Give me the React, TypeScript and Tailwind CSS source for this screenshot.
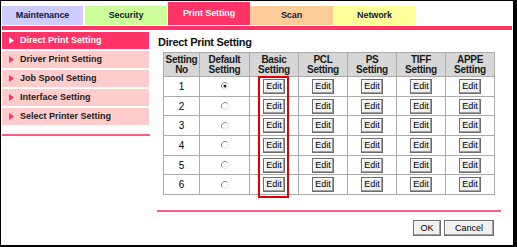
import React from 'react';

const tabs = [
  { label: 'Maintenance', cls: 'ml-[1px] w-[81px] h-[19px] bg-[#ccccff] text-[#16163a]' },
  { label: 'Security', cls: 'ml-[2px] w-[82px] h-[19px] bg-[#ccff99] text-[#16163a]' },
  { label: 'Print Setting', cls: 'ml-[1px] w-[82px] h-[23px] bg-[#ff3366] text-white' },
  { label: 'Scan', cls: 'w-[83px] h-[19px] bg-[#ffcc99] text-[#16163a]' },
  { label: 'Network', cls: 'w-[83px] h-[19px] bg-[#ffff99] text-[#16163a]' },
];

const menu = [
  'Direct Print Setting',
  'Driver Print Setting',
  'Job Spool Setting',
  'Interface Setting',
  'Select Printer Setting',
];

const headers = [
  ['Setting', 'No'],
  ['Default', 'Setting'],
  ['Basic', 'Setting'],
  ['PCL', 'Setting'],
  ['PS', 'Setting'],
  ['TIFF', 'Setting'],
  ['APPE', 'Setting'],
];

const colWidths = ['w-[36px]', 'w-[50px]', 'w-[49px]', 'w-[49px]', 'w-[49px]', 'w-[49px]', 'w-[49px]'];

const btn =
  'border border-[#6e6e6e] bg-[#f0f0f0] text-[9px] leading-none text-black shadow-[inset_-1px_-1px_#a0a0a0,inset_1px_1px_#ffffff]';

function Radio({ checked }: { checked?: boolean }) {
  return (
    <svg width="8" height="8" viewBox="0 0 8 8" className="mx-auto block">
      <path d="M6.5 1.5 A3.5 3.5 0 0 0 1.5 6.5" fill="none" stroke="#8a8a8a" strokeWidth="1" />
      <path d="M1.5 6.5 A3.5 3.5 0 0 0 6.5 1.5" fill="none" stroke="#e2e2e2" strokeWidth="1" />
      {checked && <circle cx="4" cy="4" r="1.5" fill="#222" />}
    </svg>
  );
}

function Arrow({ color }: { color: string }) {
  return (
    <svg width="5" height="7" viewBox="0 0 5 7" className="shrink-0">
      <path d="M0 0 L5 3.5 L0 7 Z" fill={color} />
    </svg>
  );
}

export default function App() {
  return (
    <div className="box-border h-[247px] w-[517px] border-t border-l border-r-4 border-b-2 border-black bg-white font-['Liberation_Sans',Arial,sans-serif]">
      {/* top tabs */}
      <div className="flex h-[24px] items-end pt-[1px]">
        {tabs.map((t) => (
          <div
            key={t.label}
            className={`flex items-center justify-center text-[9px] font-bold tracking-[-0.1px] ${t.cls}`}
          >
            {t.label}
          </div>
        ))}
      </div>
      <div className="mx-[1px] mt-[1px] h-[4px] bg-[#ff3366]" />

      <div className="flex">
        {/* left menu */}
        <div className="ml-[1px] w-[148px]">
          <div className="mt-[2px] flex flex-col gap-[2px]">
            {menu.map((m, i) => (
              <div
                key={m}
                className={`flex h-[17px] w-[147px] items-center gap-[6px] pl-[7px] text-[9px] font-bold ${
                  i === 0 ? 'bg-[#ff3366] text-white' : 'bg-[#ffcccc] text-[#1a1a1a]'
                }`}
              >
                <Arrow color={i === 0 ? '#ffffff' : '#ff3366'} />
                <span>{m}</span>
              </div>
            ))}
          </div>
          <div className="mt-[9px] h-[2px] w-[148px] bg-[#ff5c80]" />
        </div>

        {/* main */}
        <div className="ml-[7px] w-[344px]">
          <div className="mt-[5px] pl-[1px] text-[11px] font-bold leading-[14px] tracking-[-0.3px] text-[#111]">
            Direct Print Setting
          </div>
          <div className="relative ml-[6px] mt-[3px] w-[331px]">
            <table className="w-[331px] table-fixed border-collapse text-center">
              <colgroup>
                {colWidths.map((w, i) => (
                  <col key={i} className={w} />
                ))}
              </colgroup>
              <thead>
                <tr className="h-[24px] bg-[#d6d6d6]">
                  {headers.map(([a, b]) => (
                    <th
                      key={a}
                      className="border border-[#ababab] p-0 text-[10px] font-bold leading-[10px] tracking-[-0.3px] text-[#1a1a1a]"
                    >
                      {a}
                      <br />
                      {b}
                    </th>
                  ))}
                </tr>
              </thead>
              <tbody>
                {[1, 2, 3, 4, 5, 6].map((n) => (
                  <tr key={n} className="h-[19.7px]">
                    <td className="border border-[#ababab] p-0 text-[10px] text-black">{n}</td>
                    <td className="border border-[#ababab] p-0">
                      <Radio checked={n === 1} />
                    </td>
                    {[0, 1, 2, 3, 4].map((c) => (
                      <td key={c} className="border border-[#ababab] p-0">
                        <button className={`mx-auto block h-[15px] w-[22px] ${btn}`}>Edit</button>
                      </td>
                    ))}
                  </tr>
                ))}
              </tbody>
            </table>
            <div className="pointer-events-none absolute left-[95px] top-[24px] h-[122px] w-[31px] border-2 border-[#e00000]" />
          </div>
          <div className="mt-[15px] h-[2px] w-[344px] bg-[#ff5c80]" />
          <div className="mt-[8px] flex justify-end gap-[3px] pr-[7px]">
            <button className={`h-[16px] w-[28px] ${btn}`}>OK</button>
            <button className={`h-[16px] w-[50px] ${btn}`}>Cancel</button>
          </div>
        </div>
      </div>
    </div>
  );
}
